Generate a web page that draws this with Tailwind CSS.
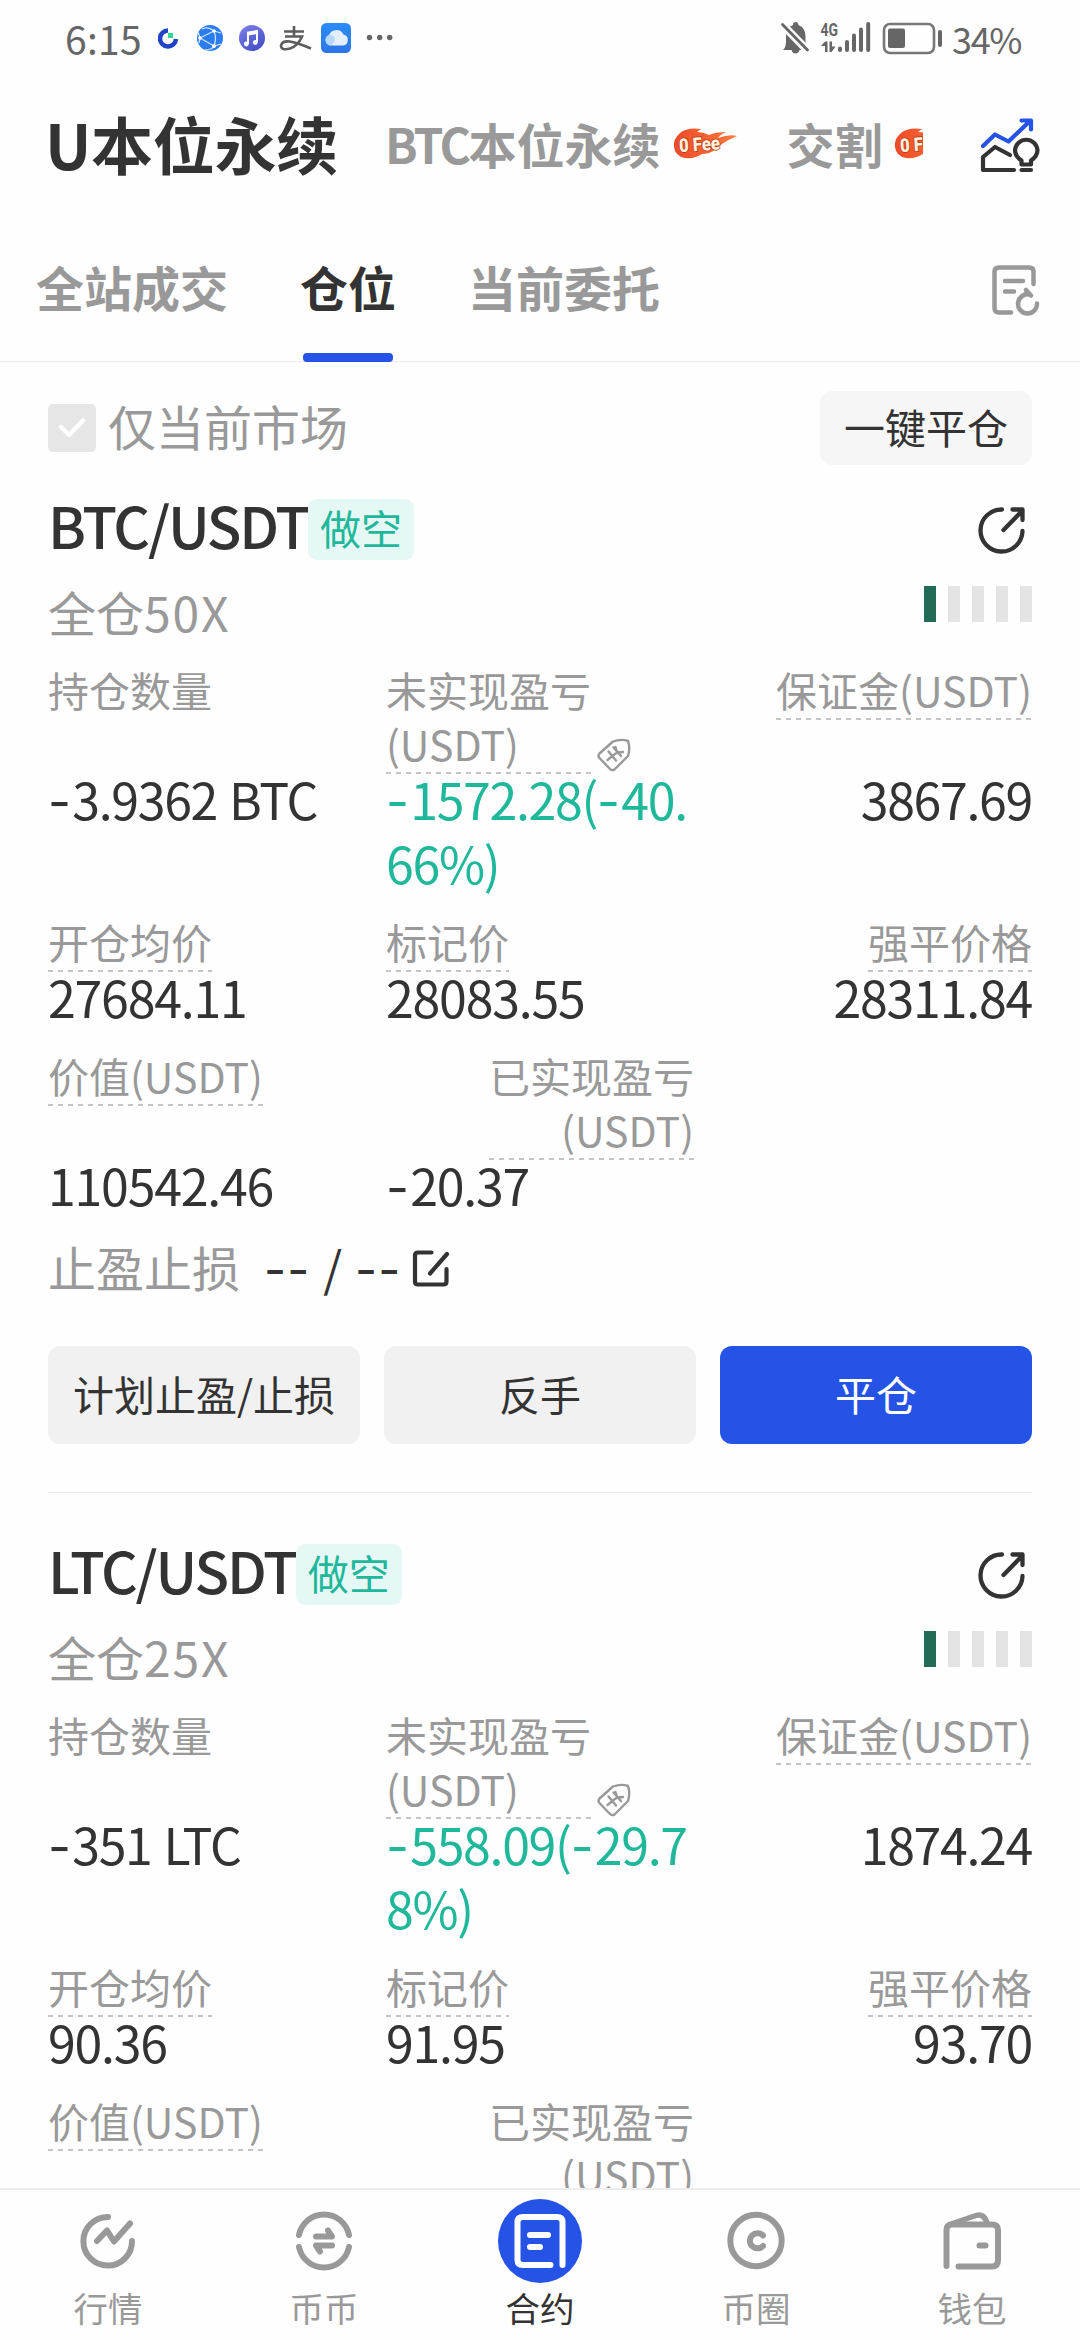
<!DOCTYPE html>
<html lang="zh-CN">
<head>
<meta charset="utf-8">
<meta name="viewport" content="width=1080">
<title>U本位永续</title>
<script src="https://cdn.jsdelivr.net/npm/@tailwindcss/browser@4"></script>
</head>
<body class="bg-white">
<div class="flex h-[2340px] w-[1080px] flex-col overflow-hidden bg-[#fefefe] font-['Noto_Sans_CJK_SC',sans-serif] text-[#333]">

  <!-- status bar -->
  <div class="flex h-[76px] shrink-0 items-center pl-[65px] text-[#666]">
    <span class="w-[93px] text-[39px] leading-[74px] tracking-[0.3px]">6:15</span>
    <svg class="h-[56px] w-[240px]" viewBox="158 10 240 56" fill="none">
      <defs>
        <linearGradient id="mus" x1="0" y1="0" x2="0.6" y2="1"><stop offset="0" stop-color="#7d83ea"/><stop offset="1" stop-color="#4650c8"/></linearGradient>
        <linearGradient id="cld" x1="0" y1="0" x2="0" y2="1"><stop offset="0" stop-color="#2a8cf5"/><stop offset="1" stop-color="#2d76e8"/></linearGradient>
      </defs>
      <path d="M168 30.500A8 8 0 1 0 176 39" stroke="#2043c9" stroke-width="4.500"/>
      <rect x="168" y="33" width="5" height="5" fill="#2fd694"/>
      <circle cx="210" cy="38" r="13" fill="#2b7cf0"/>
      <path d="M200 38L214 31M200 38L214 46M214 31Q217 38 214 46M214 31Q208 26 202 29M214 31L221 33M214 46Q212 50 205 50M214 46L221 44M200 38L198 32M200 38L199 43" stroke="#cfe4ff" stroke-width="1.300"/>
      <circle cx="200" cy="38" r="1.800" fill="#fff"/><circle cx="214" cy="31" r="1.800" fill="#fff"/><circle cx="214" cy="46" r="2" fill="#fff"/>
      <circle cx="252" cy="38" r="13" fill="url(#mus)"/>
      <path d="M248 44V32.500L257 31V42M248 34.500L257 33" stroke="#fff" stroke-width="2"/>
      <circle cx="246.300" cy="44" r="2.400" fill="#fff"/><circle cx="255.300" cy="42.500" r="2.400" fill="#fff"/>
      <path d="M284 31.500H304M294 26V36.500M285 36.500H302Q298 46 290 48.500Q281 51 281 45.500Q282 40.500 290 41.500Q298 43 311 48.500" stroke="#5c5c5c" stroke-width="2.600"/>
      <rect x="321" y="23" width="30" height="30" rx="5.500" fill="url(#cld)"/>
      <path d="M330 45.500a5.500 5.500 0 0 1-1-10.500a8 8 0 0 1 14.500-0.500a5.600 5.600 0 0 1-0.500 11z" fill="#e4f0ff"/>
      <path d="M330 45.500a5.500 5.500 0 0 1-1-10.500q5 0 6 4q0 4-5 6.500z" fill="#b9d6fb"/>
      <g fill="#666"><circle cx="369.500" cy="37.500" r="2.700"/><circle cx="379.700" cy="37.500" r="2.700"/><circle cx="389.700" cy="37.500" r="2.700"/></g>
    </svg>
    <div class="ml-auto flex items-center">
      <svg class="h-[56px] w-[170px]" viewBox="778 10 170 56" fill="#666">
        <path d="M782 50q3-3 3-8v-6q0-8 7-11q0-3 2.500-3t3 3q7 3 7 11v6q0 5 3 8z"/>
        <path d="M790.500 50h8q-1 3.500-4 3.500t-4-3.500z"/>
        <path d="M780 23L808 52" stroke="#fefefe" stroke-width="8"/>
        <path d="M781.500 24.500L806.500 50" stroke="#666" stroke-width="2.800" stroke-linecap="round"/>
        <text x="819.500" y="35.500" font-family="Roboto, sans-serif" font-weight="700" font-size="18.500" textLength="17.500" lengthAdjust="spacingAndGlyphs">4G</text>
        <path d="M820 46l4-4.500h2.500v10.500h-2.500v-6zM828.500 41.500h2.500v5h3.500l-4 5.500h-2z"/>
        <rect x="837" y="46.500" width="4" height="5.500" rx="2"/><rect x="844" y="40" width="4" height="12" rx="2"/><rect x="851" y="33.500" width="4" height="18.500" rx="2"/><rect x="858" y="27.500" width="4" height="24.500" rx="2"/><rect x="865.200" y="22" width="4" height="30" rx="2"/>
        <rect x="883" y="24" width="50" height="29" rx="6" fill="none" stroke="#777" stroke-width="2.600"/>
        <rect x="887" y="28.500" width="17" height="19.500" rx="2"/>
        <rect x="937" y="30" width="4" height="17" rx="2"/>
      </svg>
      <span class="mr-[59px] ml-[3px] text-[36px] leading-[75px] tracking-[-1.400px]">34%</span>
    </div>
  </div>

  <!-- contract type -->
  <div class="flex h-[134px] shrink-0 items-center pl-[45px]">
    <span class="text-[62px] leading-none font-bold tracking-[-0.3px]">U本位永续</span>
    <div class="ml-[47px] flex w-[538px] items-center overflow-hidden font-bold whitespace-nowrap text-[#999]">
      <span class="flex text-[48px] leading-[70px]"><span class="tracking-[-2.500px]">BTC</span>本位永续</span>
      <svg class="ml-[12px] h-[36px] w-[66px] shrink-0" viewBox="0 0 66 36">
        <defs><linearGradient id="flame" x1="0" y1="0" x2="1" y2="0"><stop offset="0" stop-color="#ee4a28"/><stop offset="1" stop-color="#fb7a3c"/></linearGradient></defs>
        <path d="M28 4Q14 2 7 8Q0 14 1 22Q2 31 12 33Q22 34 29 29Q36 29 42 25Q48 18 64 11Q56 9 45 13Q48 9 53 7Q42 7 36 10Q30 7 24 7Z" fill="url(#flame)"/>
        <text x="6" y="26" font-family="Roboto, sans-serif" font-weight="900" font-size="19" fill="#fff0dc" stroke="#b5371b" stroke-width="1.500" paint-order="stroke" textLength="41" lengthAdjust="spacingAndGlyphs" transform="rotate(-4 24 20)">0 Fee</text>
      </svg>
      <span class="ml-[48px] text-[48px] leading-[70px]">交割</span>
      <svg class="ml-[11px] h-[36px] w-[66px] shrink-0" viewBox="0 0 66 36">
        <path d="M28 4Q14 2 7 8Q0 14 1 22Q2 31 12 33Q22 34 29 29Q36 29 42 25Q48 18 64 11Q56 9 45 13Q48 9 53 7Q42 7 36 10Q30 7 24 7Z" fill="url(#flame)"/>
        <text x="6" y="26" font-family="Roboto, sans-serif" font-weight="900" font-size="19" fill="#fff0dc" stroke="#b5371b" stroke-width="1.500" paint-order="stroke" textLength="41" lengthAdjust="spacingAndGlyphs" transform="rotate(-4 24 20)">0 Fee</text>
      </svg>
    </div>
    <svg class="mt-[4px] mr-[38px] ml-auto h-[60px] w-[64px]" viewBox="978 116 64 60" fill="none" stroke-width="4.200" stroke-linecap="round" stroke-linejoin="round">
      <path d="M983 147L995 135.500L1008.500 142.500L1030 122M1021.500 121.500H1031V130.500" stroke="#2553e6"/>
      <path d="M1014 171H983V158L995 148L1010 156" stroke="#333"/>
      <path d="M1021.500 165.500V161.500C1017 158.500 1015 154.500 1015 151A11.300 11.300 0 0 1 1037.500 151C1037.500 154.500 1035.500 158.500 1031 161.500V165.500ZM1021.500 171H1031" stroke="#333"/>
    </svg>
  </div>

  <!-- tabs -->
  <div class="flex h-[152px] shrink-0 items-start border-b border-[#ebebeb] pl-[36px] text-[48px] font-bold text-[#999]">
    <div class="mt-[43px] w-[192px] leading-[66px] whitespace-nowrap">全站成交</div>
    <div class="mt-[43px] ml-[71px] flex w-[98px] flex-col items-center text-[#333]">
      <span class="leading-[66px]">仓位</span>
      <span class="mt-[34px] h-[9px] w-[90px] rounded-[4px] bg-[#2553e6]"></span>
    </div>
    <div class="mt-[43px] ml-[71px] leading-[66px]">当前委托</div>
    <svg class="mt-[50px] mr-[38px] ml-auto h-[60px] w-[54px]" viewBox="988 260 54 60" fill="none" stroke="#999" stroke-width="4.500" stroke-linecap="round" stroke-linejoin="round">
      <path d="M1011 312.500H999Q994.500 312.500 994.500 308V271.500Q994.500 267.500 999 267.500H1029Q1033.500 267.500 1033.500 271.500V284M1005 281H1023M1005 291.500H1014"/>
      <path d="M1026 290L1031 295.500M1029 294.500A9.500 9.500 0 1 0 1037 303.500M1026.500 290.500V294"/>
    </svg>
  </div>

  <!-- scrolling list -->
  <div class="min-h-0 flex-1 overflow-hidden px-[48px]">
    <div class="flex h-[132px] items-center">
      <div class="flex h-[48px] w-[48px] items-center justify-center rounded-[5px] bg-[#e6e6e6]">
        <svg class="h-[24px] w-[30px]" viewBox="0 0 30 24" fill="none" stroke="#fff" stroke-width="4.500" stroke-linecap="round" stroke-linejoin="round"><path d="M4 11L12 19L26 4.500"/></svg>
      </div>
      <span class="ml-[12px] -mt-[6px] text-[48px] leading-none text-[#999]">仅当前市场</span>
      <div class="ml-auto flex h-[74px] w-[212px] items-center justify-center rounded-[12px] bg-[#f6f6f6] pb-[4px] text-[41px] leading-none">一键平仓</div>
    </div>
    <div id="positions"></div>
  </div>

  <!-- bottom navigation -->
  <div class="grid h-[152px] shrink-0 grid-cols-5 border-t-2 border-[#ededed] bg-[#fefefe] text-[34.500px] leading-[48px] text-[#999]">
    <div class="flex flex-col items-center">
      <svg class="mt-[9px] h-[84px] w-[84px]" viewBox="66 2199 84 84" fill="none" stroke="#999" stroke-width="6" stroke-linecap="round" stroke-linejoin="round">
        <path d="M108 2217A24.300 24.300 0 1 0 132 2241"/><path d="M97 2241L107 2230.500L114 2241.500L130 2223.500"/>
      </svg>
      <span>行情</span>
    </div>
    <div class="flex flex-col items-center">
      <svg class="mt-[9px] h-[84px] w-[84px]" viewBox="282 2199 84 84" fill="none" stroke="#999" stroke-width="6" stroke-linecap="round" stroke-linejoin="round">
        <path d="M299 2235A25.500 25.500 0 0 1 349 2235M299 2247A25.500 25.500 0 0 0 349 2247"/>
        <path d="M316 2236.500H332L328 2230.500M332 2245.500H316L320 2251.500"/>
      </svg>
      <span>币币</span>
    </div>
    <div class="flex flex-col items-center text-[#333]">
      <svg class="mt-[9px] h-[84px] w-[84px]" viewBox="498 2199 84 84" fill="none" stroke="#fff" stroke-width="6" stroke-linecap="round" stroke-linejoin="round">
        <circle cx="540" cy="2241" r="42" fill="#2553e6" stroke="none"/>
        <path d="M550.500 2265H523Q517.500 2265 517.500 2260V2222Q517.500 2217 523 2217H557Q562.500 2217 562.500 2222V2265M530 2235H548M530 2247H540"/>
      </svg>
      <span>合约</span>
    </div>
    <div class="flex flex-col items-center">
      <svg class="mt-[9px] h-[84px] w-[84px]" viewBox="714 2199 84 84" fill="none" stroke="#999" stroke-width="6" stroke-linecap="round">
        <circle cx="756" cy="2240.500" r="25.700"/><path d="M763 2235.500A7.600 7.600 0 1 0 763 2246"/>
      </svg>
      <span>币圈</span>
    </div>
    <div class="flex flex-col items-center">
      <svg class="mt-[9px] h-[84px] w-[84px]" viewBox="930 2199 84 84" fill="none" stroke="#999" stroke-width="6" stroke-linecap="round" stroke-linejoin="round">
        <path d="M946.500 2266V2230Q946.500 2224.500 952 2224.500H992Q998 2224.500 998 2230V2260Q998 2266.500 992 2266.500H958.500M979.500 2245.500H985.500"/>
        <path d="M951 2224L976 2215.500Q984 2213 987 2223" stroke-width="5.500"/>
      </svg>
      <span>钱包</span>
    </div>
  </div>
</div>

<script>
  const positions = [
    { pair: 'BTC/USDT', lev: '50X', size: '-3.9362 BTC', pnl: ['-1572.28(-40.', '66%)'], margin: '3867.69', open: '27684.11', mark: '28083.55', liq: '28311.84', value: '110542.46', realized: '-20.37' },
    { pair: 'LTC/USDT', lev: '25X', size: '-351 LTC', pnl: ['-558.09(-29.7', '8%)'], margin: '1874.24', open: '90.36', mark: '91.95', liq: '93.70' }
  ];
  const num = s => s.replace(/-/g, '<span class="font-[Inter,sans-serif] leading-none tracking-[1.200px]">-</span>');
  const dash = '<span class="mt-[2px] block h-[2px] bg-[repeating-linear-gradient(90deg,#c4c4c4_0_5px,transparent_5px_10px)]"></span>';
  const usdt = '<span>(USDT)</span>';

  const figures = p => `
      <div class="-mt-[8px] grid h-[64px] grid-cols-[338px_308px_338px] text-[50px] leading-[64px] tracking-[-1.200px] whitespace-nowrap">
        <div>${p.value}</div><div>${num(p.realized)}</div>
      </div>

      <div class="flex h-[100px] items-center">
        <span class="text-[48px] leading-[100px] text-[#999]">止盈止损</span>
        <span class="ml-[24px] w-[146px] text-[48px] leading-[100px] [word-spacing:2px] whitespace-nowrap">${num('-- / --')}</span>
        <svg class="mt-[4px] h-[44px] w-[44px]" viewBox="410 1246 44 44" fill="none" stroke="#333" stroke-width="4.200" stroke-linecap="round" stroke-linejoin="round">
          <path d="M431.500 1252.500H418Q415 1252.500 415 1255.500V1281.500Q415 1284.500 418 1284.500H443.500Q446.500 1284.500 446.500 1281.500V1269M430 1273.500L447 1254"/>
        </svg>
      </div>

      <div class="mt-[30px] grid grid-cols-3 gap-[24px] text-[41px] leading-[94px]">
        <div class="h-[98px] rounded-[12px] bg-[#f1f1f1] text-center whitespace-nowrap">计划止盈/止损</div>
        <div class="h-[98px] rounded-[12px] bg-[#f1f1f1] text-center">反手</div>
        <div class="h-[98px] rounded-[12px] bg-[#2553e6] text-center text-white">平仓</div>
      </div>
      <div class="mt-[48px] mb-[46px] h-px bg-[#e8e8e8]"></div>`;

  const card = p => `
    <section>
      <div class="flex h-[66px] items-center">
        <span class="-mt-[6px] text-[57px] leading-none font-medium tracking-[-2.200px]">${p.pair}</span>
        <span class="mt-[5px] flex h-[61px] w-[106px] items-center justify-center rounded-[9px] bg-[#e6f8f5] pb-[4px] text-[41px] leading-none text-[#1fb89a]">做空</span>
        <svg class="mt-[6px] mr-[4px] ml-auto h-[52px] w-[52px]" viewBox="976 504 52 52" fill="none" stroke="#333" stroke-width="4.300" stroke-linecap="round" stroke-linejoin="round">
          <path d="M1002 509.500A21 21 0 1 0 1022.500 531M1003.500 530L1022 511M1012.500 509.500H1022.500V520"/>
        </svg>
      </div>
      <div class="flex h-[102px] items-start justify-between">
        <span class="text-[48px] leading-[102px] text-[#999]">全仓<span class="tracking-[1.900px]">${p.lev}</span></span>
        <div class="mt-[26px] flex gap-[12px]">
          <i class="h-[36px] w-[12px] bg-[#236b57]"></i><i class="h-[36px] w-[12px] bg-[#e4e4e4]"></i><i class="h-[36px] w-[12px] bg-[#e4e4e4]"></i><i class="h-[36px] w-[12px] bg-[#e4e4e4]"></i><i class="h-[36px] w-[12px] bg-[#e4e4e4]"></i>
        </div>
      </div>

      <div class="grid h-[112px] grid-cols-[338px_308px_338px] items-start text-[41px] leading-[54px] text-[#999]">
        <div>持仓数量</div>
        <div class="flex items-end">
          <div class="w-[205px]">未实现盈亏<br>${usdt}${dash}</div>
          <svg class="mb-[1px] ml-[4px] h-[36px] w-[38px]" viewBox="595 737 38 36" fill="none" stroke="#999" stroke-width="2.400" stroke-linejoin="round" stroke-linecap="round">
            <path d="M599.500 753.500L613 741.500Q621 738.500 628 741Q630.500 748 628 756L614.500 769.500Q612 771 610 769L599.500 758Q597.500 756 599.500 753.500Z"/>
            <path d="M608.500 751.500L616 760.500M613.500 747.500L621 756M607.500 760L613 755.500M615.500 747L617 752.500L623 752M612 756L618 752"/>
          </svg>
        </div>
        <div class="justify-self-end">保证金${usdt}${dash}</div>
      </div>
      <div class="-mt-[8px] grid h-[128px] grid-cols-[338px_308px_338px] items-start text-[50px] leading-[64px] tracking-[-1.300px] whitespace-nowrap">
        <div class="[word-spacing:2px]">${num(p.size)}</div>
        <div class="text-[#1fb89a]">${num(p.pnl[0])}<br>${p.pnl[1]}</div>
        <div class="text-right">${p.margin}</div>
      </div>

      <div class="mt-[20px] grid h-[58px] grid-cols-[338px_308px_338px] items-start text-[41px] leading-[54px] text-[#999]">
        <div class="justify-self-start">开仓均价${dash}</div>
        <div class="justify-self-start">标记价${dash}</div>
        <div class="justify-self-end">强平价格${dash}</div>
      </div>
      <div class="-mt-[8px] grid h-[64px] grid-cols-[338px_308px_338px] text-[50px] leading-[64px] tracking-[-1.200px] whitespace-nowrap">
        <div>${p.open}</div><div>${p.mark}</div><div class="text-right">${p.liq}</div>
      </div>

      <div class="mt-[20px] grid h-[112px] grid-cols-[338px_308px_338px] items-start text-[41px] leading-[54px] text-[#999]">
        <div class="justify-self-start">价值${usdt}${dash}</div>
        <div class="w-[205px] justify-self-end text-right">已实现盈亏<br>${usdt}${dash}</div>
      </div>
      ${p.value ? figures(p) : ''}
    </section>`;
  document.getElementById('positions').innerHTML = positions.map(card).join('');
</script>
</body>
</html>
